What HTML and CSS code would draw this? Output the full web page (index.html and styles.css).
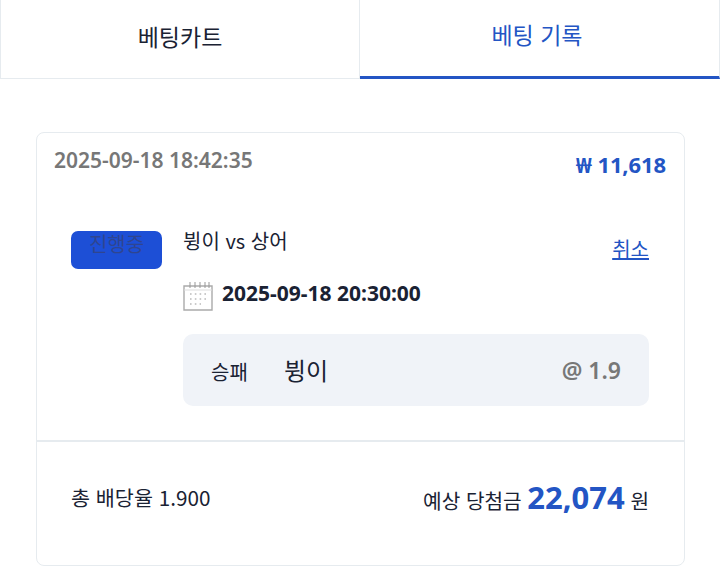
FILE: index.html
```html
<!DOCTYPE html>
<html lang="ko">

<head>
    <meta charset="UTF-8">
    <meta name="viewport" content="width=device-width, initial-scale=1.0">
    <title>베팅 기록</title>
    <link rel="stylesheet" href="styles.css">
</head>

<body>
    <div class="tabs">
        <div class="tab">베팅카트</div>
        <div class="tab active">베팅 기록</div>
    </div>

    <div class="card">
        <div class="card-head">
            <span class="placed-at">2025-09-18 18:42:35</span>
            <span class="stake">₩ 11,618</span>
        </div>

        <div class="bet">
            <div class="status">진행중</div>
            <div class="bet-main">
                <div class="match-row">
                    <span class="match">뷩이 vs 상어</span>
                    <a href="#" class="cancel">취소</a>
                </div>
                <div class="date-row">
                    <svg class="calendar" width="30" height="30" viewBox="0 0 30 30" fill="none">
                        <path d="M1 5H29V29H1Z" stroke="#aaa" stroke-width="1.4" />
                        <path d="M1 9H29" stroke="#ddd" stroke-width="1" />
                        <path d="M7 1V7M12 1V7M17 1V7M22 1V7M26 1V7" stroke="#999" stroke-width="1" />
                        <path d="M7 13H24M7 18H24M7 23H18" stroke="#bbb" stroke-width="1.6" stroke-dasharray="1.6 3.2" />
                    </svg>
                    <span class="match-date">2025-09-18 20:30:00</span>
                </div>
                <div class="pick">
                    <span class="market">승패</span>
                    <span class="selection">뷩이</span>
                    <span class="odds">@ 1.9</span>
                </div>
            </div>
        </div>

        <div class="card-foot">
            <span class="total-odds">총 배당율 1.900</span>
            <span class="payout">예상 당첨금 <strong>22,074</strong> 원</span>
        </div>
    </div>
</body>

</html>
```

FILE: styles.css
```css
* {
    box-sizing: border-box;
}

body {
    margin: 0;
    background: #fff;
    color: #1a2233;
    font-family: 'Noto Sans CJK KR', 'Noto Sans', sans-serif;
}

.tabs {
    display: flex;
    height: 79px;
}

.tab {
    display: flex;
    align-items: center;
    justify-content: center;
    width: 360px;
    padding-bottom: 7px;
    border: 1px solid #e6ebef;
    border-top: none;
    font-size: 23px;
}

.tab.active {
    padding: 0 5px 9px 0;
    border-left: none;
    border-bottom: 3px solid #2355c4;
    color: #2355c4;
}

.card {
    display: flex;
    flex-direction: column;
    height: 434px;
    margin: 53px 35px 0 36px;
    border: 1px solid #e6ebef;
    border-radius: 8px;
}

.card-head {
    display: flex;
    justify-content: space-between;
    padding: 13px 18px 0 17px;
}

.placed-at {
    color: #777;
    font-family: 'Noto Sans', sans-serif;
    font-size: 21px;
    font-weight: 600;
}

.stake {
    margin-top: 3px;
    color: #2355c4;
    font-family: 'Noto Sans', sans-serif;
    font-size: 22px;
    font-weight: 700;
    letter-spacing: -0.1px;
}

.bet {
    display: flex;
    gap: 21px;
    height: 261px;
    padding: 52px 35px 0 34px;
}

.status {
    flex: none;
    width: 91px;
    height: 38px;
    border-radius: 7px;
    background: #1d4fd6;
    color: #2f4590;
    font-size: 20px;
    line-height: 26px;
    text-align: center;
}

.bet-main {
    flex: 1;
}

.match-row {
    display: flex;
    justify-content: space-between;
}

.match {
    margin-top: -5px;
    font-size: 20px;
}

.cancel {
    margin-top: 3px;
    color: #2355c4;
    font-size: 20px;
}

.date-row {
    display: flex;
    align-items: center;
    gap: 9px;
    margin-top: 16px;
}

.calendar {
    flex: none;
}

.match-date {
    margin-bottom: 6px;
    font-family: 'Noto Sans', sans-serif;
    font-size: 21px;
    font-weight: 700;
}

.pick {
    display: flex;
    align-items: center;
    height: 72px;
    margin-top: 21px;
    padding: 0 28px;
    border-radius: 10px;
    background: #f0f3f8;
}

.market {
    width: 73px;
    margin-top: 3px;
    font-size: 20px;
}

.selection {
    margin-bottom: 1px;
    font-size: 24px;
}

.odds {
    margin-left: auto;
    color: #777;
    font-family: 'Noto Sans', sans-serif;
    font-size: 23px;
    font-weight: 600;
}

.card-foot {
    display: flex;
    align-items: center;
    justify-content: space-between;
    flex: 1;
    padding: 0 35px 13px 34px;
    border-top: 2px solid #e6ebef;
}

.total-odds {
    font-size: 20.7px;
}

.payout {
    font-size: 20.2px;
}

.payout strong {
    color: #2355c4;
    font-family: 'Noto Sans', sans-serif;
    font-size: 31px;
    font-weight: 700;
}
```
